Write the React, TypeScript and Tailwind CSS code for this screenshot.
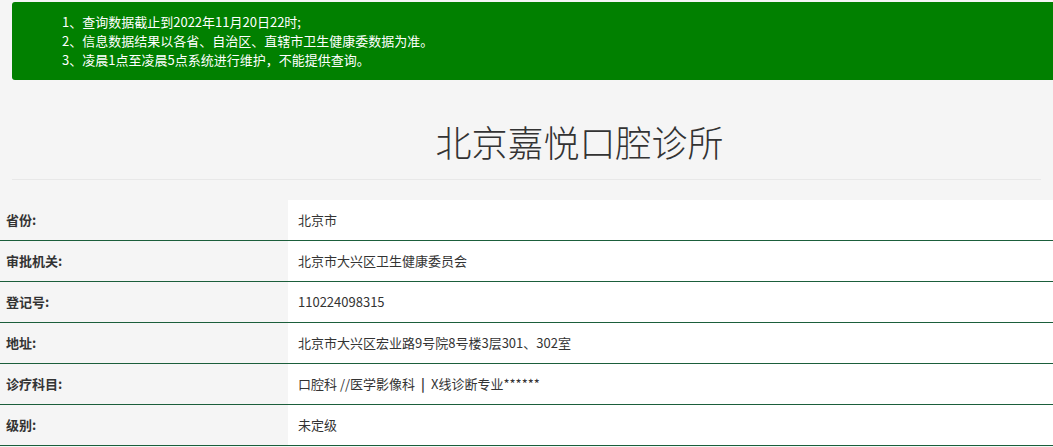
const ROWS: [string, React.ReactNode][] = [
  ['省份:', '北京市'],
  ['审批机关:', '北京市大兴区卫生健康委员会'],
  ['登记号:', '110224098315'],
  ['地址:', '北京市大兴区宏业路9号院8号楼3层301、302室'],
  ['诊疗科目:', <>口腔科 //医学影像科 <span className="mx-[6px] font-bold text-[#333]">|</span> X线诊断专业******</>],
  ['级别:', '未定级'],
]

export default function App() {
  return (
    <div className="min-h-[447px] bg-[#f5f5f5] text-[#333]" style={{ fontFamily: "'Microsoft YaHei', 'Noto Sans CJK SC', sans-serif" }}>
      <div className="pt-[2px] pl-3">
        <div className="h-[78px] rounded-l-[3px] bg-[#018000] pl-[50px] pt-[10px] text-[13px] leading-[19px] text-white">
          <div>1、查询数据截止到2022年11月20日22时;</div>
          <div>2、信息数据结果以各省、自治区、直辖市卫生健康委数据为准。</div>
          <div>3、凌晨1点至凌晨5点系统进行维护，不能提供查询。</div>
        </div>
      </div>
      <h1 className="mx-3 flex h-[100px] items-center justify-center border-b border-[#e8e8e8] pl-[106px] pt-[22px] text-[36px] font-light text-[#333]">北京嘉悦口腔诊所</h1>
      <div className="mt-[20px]">
        {ROWS.map(([k, v]) => (
          <div key={k} className="flex h-[41px] border-b border-[#1b5e3b] text-[13px]">
            <div className="flex w-[288px] items-center pl-[6px] font-bold">{k}</div>
            <div className="flex flex-1 items-center bg-white pl-[10px]">{v}</div>
          </div>
        ))}
      </div>
    </div>
  )
}
